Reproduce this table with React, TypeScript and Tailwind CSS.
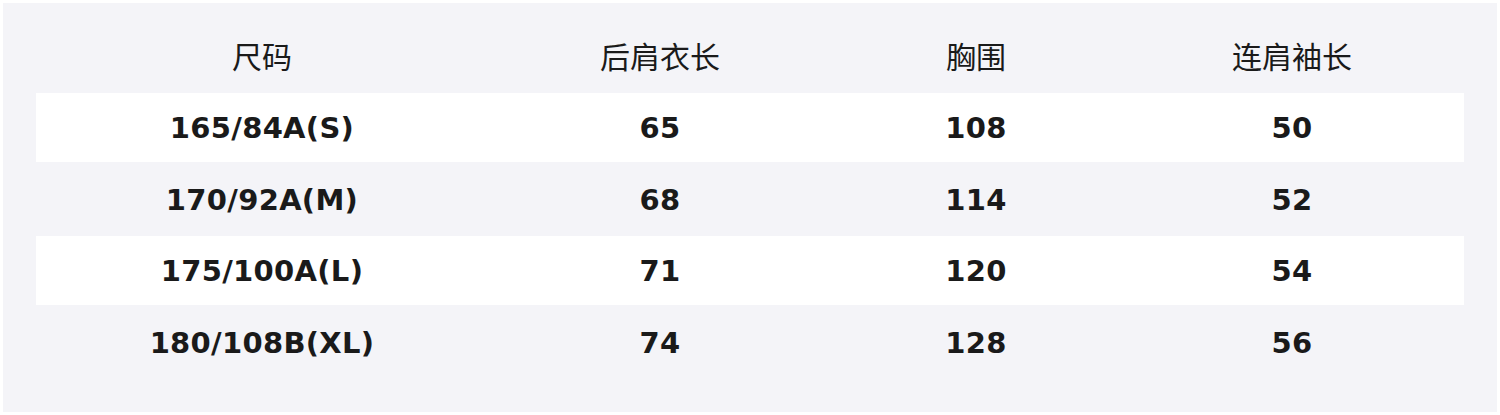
import React from 'react';

type SizeRow = {
  size: string;
  back: string;
  chest: string;
  sleeve: string;
};

const headers = ['尺码', '后肩衣长', '胸围', '连肩袖长'];

const rows: SizeRow[] = [
  { size: '165/84A(S)', back: '65', chest: '108', sleeve: '50' },
  { size: '170/92A(M)', back: '68', chest: '114', sleeve: '52' },
  { size: '175/100A(L)', back: '71', chest: '120', sleeve: '54' },
  { size: '180/108B(XL)', back: '74', chest: '128', sleeve: '56' },
];

const cols = 'grid grid-cols-[452px_344px_288px_344px]';

export default function App() {
  return (
    <div className="bg-white p-[3px] w-[1500px] h-[415px]">
      <div className="bg-[#f4f4f8] h-[409px] px-[33px] pt-[18px]">
        <div className="flex flex-col gap-[2.5px]">
          {/* header */}
          <div className={`${cols} h-[69px] items-center`}>
            {headers.map((h) => (
              <div
                key={h}
                className="text-center text-[30px] text-[#1a1a1a] font-['Noto_Sans_CJK_SC',sans-serif] leading-none pb-[1px]"
              >
                {h}
              </div>
            ))}
          </div>

          {rows.map((r, i) => (
            <div
              key={r.size}
              className={`${cols} h-[69px] items-center ${i % 2 === 0 ? 'bg-white' : 'bg-[#f4f4f8]'}`}
            >
              {[r.size, r.back, r.chest, r.sleeve].map((v, j) => (
                <div
                  key={j}
                  className="text-center text-[29px] font-bold tracking-[0.3px] text-[#1a1a1a] font-['DejaVu_Sans',sans-serif] leading-none pt-[3px]"
                >
                  {v}
                </div>
              ))}
            </div>
          ))}
        </div>
      </div>
    </div>
  );
}
